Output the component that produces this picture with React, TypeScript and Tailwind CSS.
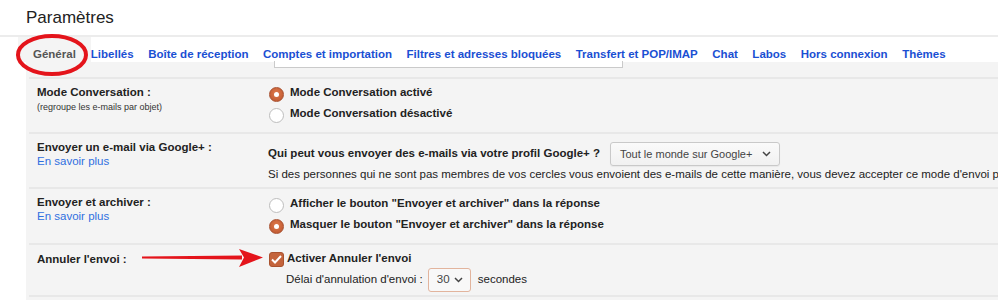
import React from 'react';

const tabs = [
  'Libellés',
  'Boîte de réception',
  'Comptes et importation',
  'Filtres et adresses bloquées',
  'Transfert et POP/IMAP',
  'Chat',
  'Labos',
  'Hors connexion',
  'Thèmes',
];

const Radio: React.FC<{ checked?: boolean }> = ({ checked }) =>
  checked ? (
    <span className="w-[15px] h-[15px] shrink-0 rounded-full bg-[radial-gradient(circle_at_50%_40%,#e07a4c,#b9532c)] border border-[#a8502f] flex items-center justify-center">
      <span className="w-[5px] h-[5px] rounded-full bg-white" />
    </span>
  ) : (
    <span className="w-[15px] h-[15px] shrink-0 rounded-full bg-white border border-[#bdbdbd]" />
  );

const Chevron = () => (
  <svg width="9" height="6" viewBox="0 0 9 6" className="shrink-0">
    <path d="M1 1l3.5 3.5L8 1" fill="none" stroke="#444" strokeWidth="1.5" />
  </svg>
);

const Row: React.FC<{ h: string; left: React.ReactNode; right: React.ReactNode }> = ({ h, left, right }) => (
  <div className={`flex border-t-2 border-[#e8e8e8] ${h}`}>
    <div className="w-[240px] shrink-0 pl-[8px]">{left}</div>
    <div className="flex-1 min-w-0">{right}</div>
  </div>
);

export default function App() {
  return (
    <div className="relative w-[998px] h-[300px] bg-white overflow-hidden font-['Liberation_Sans',Arial,sans-serif] text-[11.5px] text-[#222] whitespace-nowrap">
      {/* Title */}
      <div className="h-[35px] pl-[26px] pt-[5px] text-[17px] text-[#222]">Paramètres</div>
      <div className="h-[2px] bg-[#ececec]" />

      {/* Tabs */}
      <div className="h-[25px] flex pl-[18px] font-bold">
        <div className="h-[25px] px-[15px] pt-[9px] bg-[#f4f4f4] text-[#555]">Général</div>
        {tabs.map((t, i) => (
          <div key={t} className={`pt-[9px] text-[#1a4fd3] ${i === 0 ? 'ml-0' : 'ml-[14.5px]'}`}>{t}</div>
        ))}
      </div>

      {/* Panel */}
      <div className="ml-[26px] bg-[#f4f4f4] pt-[15px] pl-[3px] h-[238px]">
        <Row
          h="h-[55px]"
          left={
            <div className="pt-[6px]">
              <div className="font-bold leading-[14px]">Mode Conversation :</div>
              <div className="text-[9px] leading-[12px] mt-[2px] text-[#333]">(regroupe les e-mails par objet)</div>
            </div>
          }
          right={
            <div className="pt-[5px] font-bold">
              <div className="flex items-center gap-[6px] h-[21px]"><Radio checked /><span className="-mt-[3px]">Mode Conversation activé</span></div>
              <div className="flex items-center gap-[6px] h-[21px]"><Radio /><span className="-mt-[3px]">Mode Conversation désactivé</span></div>
            </div>
          }
        />
        <Row
          h="h-[55px]"
          left={
            <div className="pt-[6px] leading-[14px]">
              <div className="font-bold">Envoyer un e-mail via Google+ :</div>
              <div className="text-[#2f6fe0]">En savoir plus</div>
            </div>
          }
          right={
            <div className="pt-[8px] -ml-[1px]">
              <div className="flex items-center h-[24px]">
                <span className="font-bold">Qui peut vous envoyer des e-mails via votre profil Google+ ?</span>
                <div className="ml-[10px] h-[24px] w-[170px] flex items-center justify-between pl-[9px] pr-[8px] border border-[#c9c9c9] rounded-[3px] bg-[linear-gradient(#fafafa,#f1f1f1)] text-[11px] text-[#444] shadow-[0_1px_1px_rgba(0,0,0,0.05)]">
                  <span>Tout le monde sur Google+</span>
                  <Chevron />
                </div>
              </div>
              <div className="mt-[1px] leading-[14px]">Si des personnes qui ne sont pas membres de vos cercles vous envoient des e-mails de cette manière, vous devez accepter ce mode d'envoi pour chaque personne.</div>
            </div>
          }
        />
        <Row
          h="h-[56px]"
          left={
            <div className="pt-[6px] leading-[14px]">
              <div className="font-bold">Envoyer et archiver :</div>
              <div className="text-[#2f6fe0]">En savoir plus</div>
            </div>
          }
          right={
            <div className="pt-[6px] font-bold">
              <div className="flex items-center gap-[6px] h-[21px]"><Radio /><span className="-mt-[3px]">Afficher le bouton "Envoyer et archiver" dans la réponse</span></div>
              <div className="flex items-center gap-[6px] h-[21px]"><Radio checked /><span className="-mt-[3px]">Masquer le bouton "Envoyer et archiver" dans la réponse</span></div>
            </div>
          }
        />
        <Row
          h="h-[54px] border-b-2"
          left={
            <div className="pt-[7px] leading-[14px]">
              <div className="font-bold">Annuler l'envoi :</div>
            </div>
          }
          right={
            <div className="pt-[6px]">
              <div className="flex items-center gap-[3px] h-[16px] font-bold">
                <span className="w-[15px] h-[15px] rounded-[3px] bg-[#c4643c] border border-[#a9522f] flex items-center justify-center">
                  <svg width="11" height="9" viewBox="0 0 11 9">
                    <path d="M1 4.5l3 3 6-6.5" fill="none" stroke="white" strokeWidth="2" />
                  </svg>
                </span>
                <span className="-mt-[1px]">Activer Annuler l'envoi</span>
              </div>
              <div className="flex items-center h-[24px] pl-[17px] mt-[1px]">
                <span>Délai d'annulation d'envoi :</span>
                <div className="ml-[5px] h-[24px] w-[43px] flex items-center justify-between pl-[8px] pr-[7px] border border-[#e2b49d] rounded-[3px] bg-[#f8f8f8] text-[#444]">
                  <span>30</span>
                  <Chevron />
                </div>
                <span className="ml-[7px]">secondes</span>
              </div>
            </div>
          }
        />
      </div>

      {/* Partial white box just under the tab bar */}
      <div className="absolute left-[274px] top-[61px] w-[349px] h-[7px] bg-white border border-t-0 border-[#cacaca]" />

      {/* Annotation: red ellipse */}
      <svg className="absolute left-[15px] top-[33px]" width="74" height="44" viewBox="0 0 74 44">
        <ellipse cx="37" cy="22" rx="34" ry="19" fill="none" stroke="#e4141b" strokeWidth="4" />
      </svg>

      {/* Annotation: red arrow */}
      <svg className="absolute left-[140px] top-[248px]" width="124" height="20" viewBox="0 0 124 20">
        <path d="M2 8.5 L102 7.5 L102 11.5 L2 10.5 Z" fill="#e4141b" />
        <path d="M99 1 L123 9.5 L99 19 L104 9.5 Z" fill="#e4141b" />
      </svg>
    </div>
  );
}
